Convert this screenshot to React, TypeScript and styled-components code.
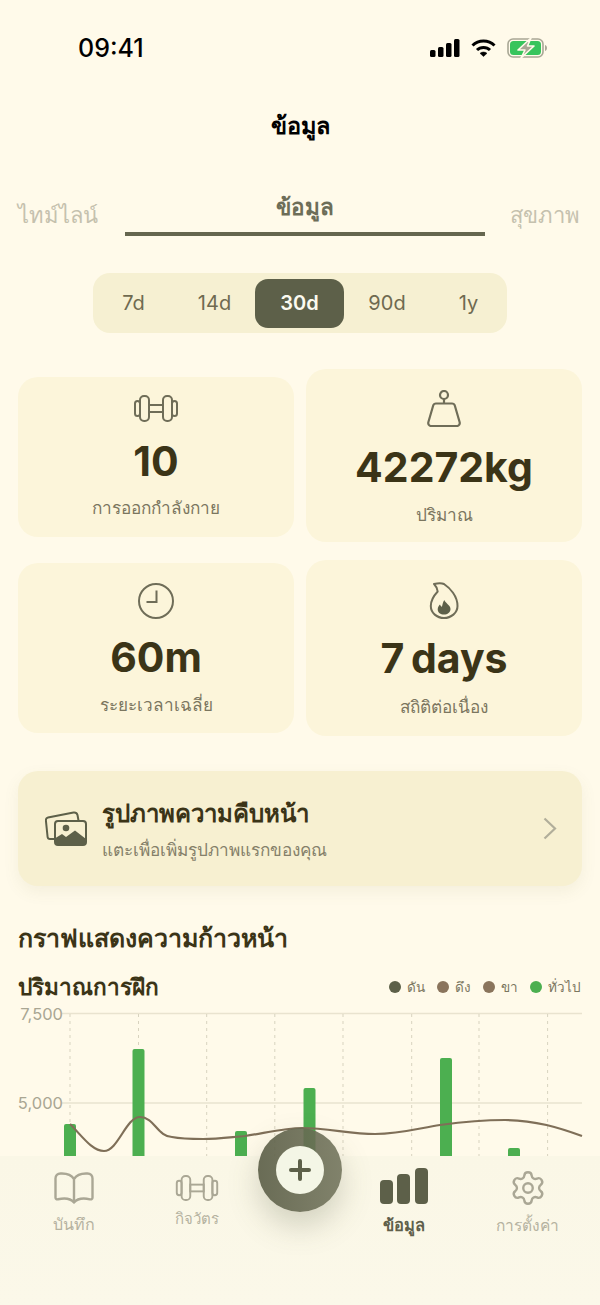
import React from 'react';
import styled, { createGlobalStyle } from 'styled-components';
import { Settings } from 'lucide-react';

const GlobalStyle = createGlobalStyle`
  html, body {
    margin: 0;
    padding: 0;
    background: #fffaea;
  }
  * {
    box-sizing: border-box;
  }
`;

const olive = '#5d6049';
const ink = '#3b3417';
const thaiStack = `Inter, 'Noto Sans', 'DejaVu Sans', sans-serif`;

const Screen = styled.div`
  position: relative;
  width: 600px;
  height: 1305px;
  overflow: hidden;
  background: #fffaea;
  font-family: ${thaiStack};
  color: ${ink};
`;

const StatusBar = styled.div`
  height: 96px;
  padding: 0 53px 0 78px;
  display: flex;
  justify-content: space-between;
  align-items: center;
`;

const Clock = styled.span`
  font-size: 25px;
  font-weight: 500;
  color: #000;
`;

const StatusIcons = styled.div`
  display: flex;
  align-items: center;
  gap: 11px;
`;

const Title = styled.h1`
  margin: 0;
  height: 60px;
  line-height: 60px;
  text-align: center;
  font-size: 23.5px;
  font-weight: 700;
  color: #000;
`;

const TabsRow = styled.div`
  height: 80px;
  padding: 0 20px 0 18px;
  display: grid;
  grid-template-columns: 107px 360px 1fr;
`;

const SideTab = styled.div<{ $end?: boolean }>`
  padding-top: 44px;
  line-height: 30px;
  font-size: 22px;
  font-weight: 500;
  color: #c5c1ae;
  text-align: ${({ $end }) => ($end ? 'right' : 'left')};
`;

const MainTab = styled.div`
  border-bottom: 4px solid #65664f;
  padding-top: 36px;
  line-height: 30px;
  text-align: center;
  font-size: 22.5px;
  font-weight: 600;
  color: #6d6d58;
`;

const Segment = styled.div`
  width: 414px;
  height: 60px;
  margin: 37px 0 0 93px;
  border-radius: 17px;
  background: #f6f0d2;
  display: grid;
  grid-template-columns: 81px 81px 89px 86px 1fr;
  align-items: center;
`;

const SegmentItem = styled.div<{ $active?: boolean }>`
  height: 49px;
  border-radius: 13px;
  display: flex;
  align-items: center;
  justify-content: center;
  font-size: 20px;
  font-weight: ${({ $active }) => ($active ? 600 : 400)};
  color: ${({ $active }) => ($active ? '#fbfaf0' : '#6f6a50')};
  background: ${({ $active }) => ($active ? olive : 'transparent')};
`;

const StatGrid = styled.div`
  margin-top: 36px;
  padding: 0 18px;
  display: grid;
  grid-template-columns: 276px 276px;
  grid-template-rows: 173px 176px;
  column-gap: 12px;
  row-gap: 18px;
`;

const StatCard = styled.div<{ $top: number; $height: number; $pad: number }>`
  margin-top: ${({ $top }) => $top}px;
  height: ${({ $height }) => $height}px;
  padding-top: ${({ $pad }) => $pad}px;
  border-radius: 20px;
  background: #fcf5da;
  display: flex;
  flex-direction: column;
  align-items: center;
`;

const StatIcon = styled.div`
  height: 40px;
  display: flex;
  align-items: center;
  justify-content: center;
`;

const StatValue = styled.div<{ $gap: number }>`
  margin-top: ${({ $gap }) => $gap}px;
  height: 44px;
  line-height: 44px;
  font-size: 41px;
  font-weight: 700;
  word-spacing: -3px;
  color: ${ink};
`;

const StatLabel = styled.div<{ $gap: number }>`
  margin-top: ${({ $gap }) => $gap}px;
  height: 24px;
  line-height: 24px;
  font-size: 17.2px;
  color: #7b765f;
`;

const PhotoCard = styled.div`
  margin: 35px 18px 0;
  height: 115px;
  padding: 0 25px 0 27px;
  border-radius: 20px;
  background: #f7f0d1;
  box-shadow: 0 6px 16px rgba(120, 110, 70, 0.08);
  display: flex;
  align-items: center;
`;

const PhotoText = styled.div`
  flex: 1;
  margin-left: 15px;
  padding-top: 3px;
  display: flex;
  flex-direction: column;
  gap: 8px;
`;

const PhotoTitle = styled.div`
  font-size: 24px;
  line-height: 32px;
  font-weight: 700;
  color: ${ink};
`;

const PhotoHint = styled.div`
  font-size: 17.2px;
  line-height: 24px;
  color: #85806a;
`;

const SectionTitle = styled.h2`
  margin: 34px 0 0 18px;
  height: 36px;
  line-height: 36px;
  font-size: 25px;
  font-weight: 700;
  color: ${ink};
`;

const ChartHead = styled.div`
  margin: 16px 0 1px;
  height: 30px;
  padding: 0 19px 0 18px;
  display: flex;
  justify-content: space-between;
  align-items: center;
`;

const ChartTitle = styled.div`
  font-size: 22.6px;
  font-weight: 600;
  color: ${ink};
`;

const Legend = styled.div`
  display: flex;
  align-items: center;
  gap: 12px;
`;

const LegendItem = styled.div`
  display: flex;
  align-items: center;
  gap: 6px;
  font-size: 13.5px;
  color: #7b765f;
`;

const LegendDot = styled.span<{ $color: string }>`
  width: 12px;
  height: 12px;
  border-radius: 50%;
  background: ${({ $color }) => $color};
`;

const Chart = styled.svg`
  display: block;
`;

const TabBar = styled.nav`
  position: absolute;
  left: 0;
  right: 0;
  bottom: 0;
  height: 149px;
  background: linear-gradient(180deg, #faf7e6, #fbf8e9);
  display: grid;
  grid-template-columns: 147px 100px 106px 102px 1fr;
`;

const TabItem = styled.div<{ $pad: number; $gap: number; $active?: boolean }>`
  padding-top: ${({ $pad }) => $pad}px;
  display: flex;
  flex-direction: column;
  align-items: center;
  gap: ${({ $gap }) => $gap}px;
  color: ${({ $active }) => ($active ? olive : '#aaa795')};
`;

const TabLabel = styled.span<{ $active?: boolean; $size?: number }>`
  line-height: 20px;
  font-size: ${({ $size }) => $size ?? 16}px;
  font-weight: ${({ $active }) => ($active ? 700 : 500)};
  color: ${({ $active }) => ($active ? '#5f5f4b' : '#b5b2a0')};
`;

const Fab = styled.div`
  position: absolute;
  left: 258px;
  top: -28px;
  width: 84px;
  height: 84px;
  border-radius: 50%;
  background: linear-gradient(90deg, rgba(93, 96, 73, 0.92), rgba(112, 114, 90, 0.88));
  box-shadow: 0 14px 30px rgba(93, 96, 73, 0.25);
  display: flex;
  align-items: center;
  justify-content: center;
`;

const FabInner = styled.div`
  width: 48px;
  height: 48px;
  border-radius: 50%;
  background: #f4f6e6;
  display: flex;
  align-items: center;
  justify-content: center;
`;

const Dumbbell = ({ width, height, color }: { width: number; height: number; color: string }) => (
  <svg width={width} height={height} viewBox="0 0 44 27" fill="none" stroke={color} strokeWidth="2">
    <rect x="1" y="6" width="5" height="15" rx="2.5" />
    <rect x="6" y="1" width="9" height="25" rx="4" />
    <rect x="15" y="10" width="14" height="7" />
    <rect x="29" y="1" width="9" height="25" rx="4" />
    <rect x="38" y="6" width="5" height="15" rx="2.5" />
  </svg>
);

const statCards = [
  {
    value: '10',
    label: 'การออกกำลังกาย',
    top: 8,
    height: 160,
    pad: 11.5,
    valueGap: 10.5,
    labelGap: 13,
    icon: <Dumbbell width={44} height={27} color="#6f6d58" />,
  },
  {
    value: '42272kg',
    label: 'ปริมาณ',
    top: 0,
    height: 173,
    pad: 19.5,
    valueGap: 16.5,
    labelGap: 14,
    icon: (
      <svg width="34" height="37" viewBox="0 0 34 37" fill="none" stroke="#6f6d58" strokeWidth="2.2">
        <circle cx="17" cy="5" r="4" />
        <path d="M17 9V13.5M9 13.5H25C26.5 13.5 27.4 14.3 27.8 15.5L32.6 32C33.2 34 32 36 30 36H4C2 36 0.8 34 1.4 32L6.2 15.5C6.6 14.3 7.5 13.5 9 13.5Z" />
      </svg>
    ),
  },
  {
    value: '60m',
    label: 'ระยะเวลาเฉลี่ย',
    top: 3,
    height: 170,
    pad: 17.5,
    valueGap: 14.5,
    labelGap: 14,
    icon: (
      <svg width="36" height="36" viewBox="0 0 36 36" fill="none" stroke="#6f6d58" strokeWidth="2">
        <circle cx="18" cy="18" r="17" />
        <path d="M18.5 7.5V19H8.5" />
      </svg>
    ),
  },
  {
    value: '7 days',
    label: 'สถิติต่อเนื่อง',
    top: 0,
    height: 176,
    pad: 20,
    valueGap: 16,
    labelGap: 15,
    icon: (
      <svg width="30" height="37" viewBox="0 0 30 37" fill="none">
        <path
          d="M5 2C9 1 13 1 15 2C21 6 28.5 14 28.5 24C28.5 31 22 36 15 36C8 36 1.8 31 1.8 24C1.8 19 4.5 14 8.7 9.5C8.5 7 7 4 5 2Z"
          stroke="#6f6d58"
          strokeWidth="2"
          strokeLinejoin="round"
        />
        <path
          d="M15.3 18C16 21 21.5 23 21.5 27C21.5 30.5 18.5 32.5 15 32.5C11.5 32.5 8.7 30.5 8.7 27.5C8.7 25 10 23.5 11 22.5C11.5 24 12.5 25 13 24.5C13.5 22.5 14 20 15.3 18Z"
          fill="#5d6049"
        />
      </svg>
    ),
  },
];

const ranges = ['7d', '14d', '30d', '90d', '1y'];

const legend = [
  { label: 'ดัน', color: '#5d6049' },
  { label: 'ดึง', color: '#8a745c' },
  { label: 'ขา', color: '#8a745c' },
  { label: 'ทั่วไป', color: '#4caf50' },
];

const bars = [
  { x: 64, top: 1124 },
  { x: 132.5, top: 1049 },
  { x: 235, top: 1131 },
  { x: 303.5, top: 1088 },
  { x: 440, top: 1058 },
  { x: 508, top: 1148 },
];

const gridX = [70, 138.5, 206.7, 274.8, 343, 411.7, 479, 547.6];

export default function App() {
  return (
    <Screen>
      <GlobalStyle />
      <StatusBar>
        <Clock>09:41</Clock>
        <StatusIcons>
          <svg width="30" height="18" viewBox="0 0 30 18" fill="#000">
            <rect x="0" y="11" width="5.5" height="7" rx="1.5" />
            <rect x="8" y="8" width="5.5" height="10" rx="1.5" />
            <rect x="16" y="4" width="5.5" height="14" rx="1.5" />
            <rect x="24" y="0" width="5.5" height="18" rx="1.5" />
          </svg>
          <svg width="25" height="18" viewBox="0 0 25 18" fill="none" stroke="#000" strokeWidth="3">
            <path d="M1.5 6.5C7.5 0.5 17.5 0.5 23.5 6.5" />
            <path d="M6 11C9.5 7.5 15.5 7.5 19 11" />
            <path d="M12.5 17.5L9 14.3C11 12.6 14 12.6 16 14.3Z" fill="#000" strokeWidth="0.5" />
          </svg>
          <svg width="40" height="20" viewBox="0 0 40 20" fill="none">
            <rect x="1" y="1" width="35" height="18" rx="5" stroke="#a9a795" strokeWidth="1.6" />
            <rect x="3" y="3" width="31" height="14" rx="3.5" fill="#37c45c" />
            <path d="M38 7V13C39.5 12.5 40 11 40 10C40 9 39.5 7.5 38 7Z" fill="#a9a795" />
            <path d="M24 0L11 12H18L14 20L27 8H20.5Z" fill="#a9a795" stroke="#fffaea" strokeWidth="1.6" strokeLinejoin="round" />
          </svg>
        </StatusIcons>
      </StatusBar>

      <Title>ข้อมูล</Title>

      <TabsRow>
        <SideTab>ไทม์ไลน์</SideTab>
        <MainTab>ข้อมูล</MainTab>
        <SideTab $end>สุขภาพ</SideTab>
      </TabsRow>

      <Segment>
        {ranges.map((range) => (
          <SegmentItem key={range} $active={range === '30d'}>
            {range}
          </SegmentItem>
        ))}
      </Segment>

      <StatGrid>
        {statCards.map((card) => (
          <StatCard key={card.value} $top={card.top} $height={card.height} $pad={card.pad}>
            <StatIcon>{card.icon}</StatIcon>
            <StatValue $gap={card.valueGap}>{card.value}</StatValue>
            <StatLabel $gap={card.labelGap}>{card.label}</StatLabel>
          </StatCard>
        ))}
      </StatGrid>

      <PhotoCard>
        <svg width="42" height="35" viewBox="0 0 42 35" fill="none">
          <path
            d="M9 28H5C3.5 28 2.7 27 2.6 26L0.9 9.5C0.8 8 1.6 6.8 3 6.5L28.5 1.5C30.5 1.2 32 2.3 32.5 4L33.5 9.5"
            stroke="#5d6049"
            strokeWidth="2"
          />
          <rect x="10" y="10" width="31" height="24" rx="3" stroke="#5d6049" strokeWidth="2" />
          <circle cx="21" cy="17" r="3.3" fill="#5d6049" />
          <path d="M10.5 27L17 23L21 26L30 19.5L41 28V30.5C41 32.5 40 34 38 34H13.5C11.5 34 10.5 32.5 10.5 30.5Z" fill="#5d6049" />
        </svg>
        <PhotoText>
          <PhotoTitle>รูปภาพความคืบหน้า</PhotoTitle>
          <PhotoHint>แตะเพื่อเพิ่มรูปภาพแรกของคุณ</PhotoHint>
        </PhotoText>
        <svg width="14" height="23" viewBox="0 0 14 23" fill="none" stroke="#b1ae9a" strokeWidth="2.2">
          <path d="M1.5 1.5L12 11.5L1.5 21.5" />
        </svg>
      </PhotoCard>

      <SectionTitle>กราฟแสดงความก้าวหน้า</SectionTitle>

      <ChartHead>
        <ChartTitle>ปริมาณการฝึก</ChartTitle>
        <Legend>
          {legend.map((item) => (
            <LegendItem key={item.label}>
              <LegendDot $color={item.color} />
              {item.label}
            </LegendItem>
          ))}
        </Legend>
      </ChartHead>

      <Chart width="600" height="153" viewBox="0 1003 600 153">
        <g stroke="#e9e3cf" strokeWidth="1.5">
          <line x1="62" y1="1013.5" x2="582" y2="1013.5" />
          <line x1="62" y1="1103" x2="582" y2="1103" />
        </g>
        <g stroke="#d8d3bf" strokeWidth="1" strokeDasharray="3 4">
          {gridX.map((x) => (
            <line key={x} x1={x} y1="1014" x2={x} y2="1156" />
          ))}
        </g>
        <g fontFamily="Inter, sans-serif" fontSize="16.5" fill="#a9a693" textAnchor="end">
          <text x="63" y="1020">7,500</text>
          <text x="63" y="1109">5,000</text>
        </g>
        <g fill="#4caf50">
          {bars.map((bar) => (
            <path
              key={bar.x}
              d={`M${bar.x} 1156V${bar.top + 2}q0 -2 2 -2h8q2 0 2 2V1156Z`}
            />
          ))}
        </g>
        <path
          d="M70 1124C82 1136 92 1151 104 1151C118 1151 126 1117 140 1117C154 1117 158 1137 172 1137C182 1139 192 1139 203 1139C218 1139 232 1137 245 1136C265 1133 285 1128 302 1128C328 1128 350 1134 375 1134C400 1134 420 1128 440 1125C462 1122 484 1120 505 1120C535 1120 560 1128 582 1136"
          fill="none"
          stroke="#7f6f58"
          strokeWidth="2.2"
        />
      </Chart>

      <TabBar>
        <TabItem $pad={16} $gap={10}>
          <svg width="40" height="32" viewBox="0 0 40 32" fill="none" stroke="#aaa795" strokeWidth="2.4" strokeLinejoin="round">
            <path d="M20 7C17.5 3 13 1.5 8 1.5H6.5C3.5 1.5 1.5 3.5 1.5 6.5V25.5C1.5 27 2.5 27.6 4 27.3C10 26 16.5 26.3 20 30.5C23.5 26.3 30 26 36 27.3C37.5 27.6 38.5 27 38.5 25.5V6.5C38.5 3.5 36.5 1.5 33.5 1.5H32C27 1.5 22.5 3 20 7ZM20 7V30" />
          </svg>
          <TabLabel>บันทึก</TabLabel>
        </TabItem>
        <TabItem $pad={19} $gap={8}>
          <Dumbbell width={44} height={26} color="#aaa795" />
          <TabLabel $size={15}>กิจวัตร</TabLabel>
        </TabItem>
        <div />
        <TabItem $pad={12} $gap={11} $active>
          <svg width="48" height="36" viewBox="0 0 48 36" fill={olive}>
            <rect x="0" y="12" width="13" height="24" rx="4" />
            <rect x="17" y="6" width="13" height="30" rx="4" />
            <rect x="35" y="0" width="13" height="36" rx="4" />
          </svg>
          <TabLabel $active $size={16.5}>ข้อมูล</TabLabel>
        </TabItem>
        <TabItem $pad={13} $gap={9}>
          <Settings size={38} strokeWidth={1.5} />
          <TabLabel $size={15.5}>การตั้งค่า</TabLabel>
        </TabItem>
        <Fab>
          <FabInner>
            <svg width="22" height="22" viewBox="0 0 22 22" stroke={olive} strokeWidth="4" strokeLinecap="round">
              <path d="M11 2V20M2 11H20" />
            </svg>
          </FabInner>
        </Fab>
      </TabBar>
    </Screen>
  );
}
